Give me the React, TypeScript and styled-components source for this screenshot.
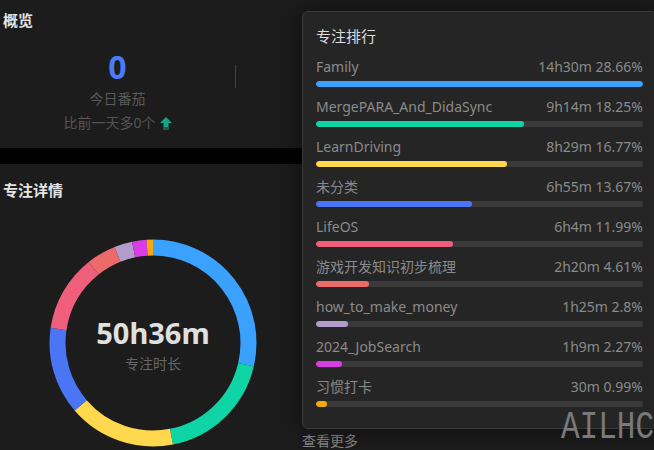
import React from "react";
import styled, { createGlobalStyle } from "styled-components";

const Global = createGlobalStyle`
  html, body { margin: 0; padding: 0; background: #1c1c1c; }
  body { width: 654px; height: 450px; overflow: hidden; font-family: "Noto Sans", "Noto Sans CJK SC", sans-serif; }
`;

const Page = styled.div`
  position: relative;
  width: 654px;
  height: 450px;
  overflow: hidden;
  background: #1c1c1c;
  display: flex;
  flex-direction: column;
`;

const Card = styled.section<{ $h: number }>`
  height: ${(p) => p.$h}px;
  background: #1c1c1c;
  display: flex;
  flex-direction: column;
  flex-shrink: 0;
`;

const Gap = styled.div`
  height: 16px;
  background: #000;
  flex-shrink: 0;
`;

const CardTitle = styled.h2<{ $top: number }>`
  margin: ${(p) => p.$top}px 0 0 3px;
  font-size: 15px;
  line-height: 20px;
  font-weight: 700;
  color: #e4e4e4;
`;

const StatRow = styled.div`
  display: flex;
  align-items: flex-start;
  margin-top: 19px;
`;

const Stat = styled.div`
  width: 235px;
  display: flex;
  flex-direction: column;
  align-items: center;
`;

const StatValue = styled.div`
  font-size: 32px;
  line-height: 36px;
  font-weight: 700;
  color: #4a7bf7;
`;

const StatLabel = styled.div`
  margin-top: 4px;
  font-size: 14px;
  line-height: 20px;
  color: #5a5a5a;
`;

const StatDiff = styled.div`
  margin-top: 4px;
  font-size: 14px;
  line-height: 20px;
  color: #555;
  display: flex;
  align-items: center;
  gap: 4px;
`;

const Divider = styled.div`
  width: 1px;
  height: 23px;
  margin-top: 16px;
  background: #444;
`;

const DetailBody = styled.div`
  display: flex;
  flex: 1;
`;

const ChartCol = styled.div`
  width: 302px;
  padding: 38px 0 0 48px;
  box-sizing: border-box;
`;

const ChartWrap = styled.div`
  position: relative;
  width: 210px;
  height: 210px;
`;

const ChartCenter = styled.div`
  position: absolute;
  inset: 0;
  display: flex;
  flex-direction: column;
  align-items: center;
  justify-content: center;
  padding-top: 2px;
  box-sizing: border-box;
`;

const Total = styled.div`
  font-size: 29px;
  line-height: 38px;
  font-weight: 700;
  color: #e0e0e0;
`;

const TotalLabel = styled.div`
  font-size: 14px;
  line-height: 20px;
  color: #666;
  margin-top: 2px;
`;

const MoreCol = styled.div`
  flex: 1;
  display: flex;
  align-items: flex-end;
`;

const More = styled.span`
  font-size: 14px;
  line-height: 19px;
  color: #8a8a8a;
`;

const Popover = styled.div`
  position: absolute;
  left: 302px;
  top: 11px;
  width: 355px;
  box-sizing: border-box;
  padding: 14px 13px 21px 13px;
  background: #252525;
  border: 1px solid #3a3a3a;
  border-radius: 6px;
  box-shadow: 0 0 28px rgba(0, 0, 0, 0.55);
  display: flex;
  flex-direction: column;
  gap: 10px;
`;

const PopTitle = styled.div`
  font-size: 15px;
  line-height: 20px;
  color: #dcdcdc;
  margin-bottom: 1px;
`;

const Row = styled.div`
  display: flex;
  flex-direction: column;
  gap: 4px;
`;

const RowHead = styled.div`
  display: flex;
  justify-content: space-between;
  font-size: 14px;
  line-height: 19px;
  color: #8a8a8a;
`;

const Track = styled.div`
  height: 6px;
  margin-top: 1px;
  border-radius: 3px;
  background: #3a3a3a;
  overflow: hidden;
`;

const Fill = styled.div<{ $color: string }>`
  height: 100%;
  border-radius: 3px;
  background: ${(p) => p.$color};
`;

const Watermark = styled.div`
  position: absolute;
  right: 0;
  bottom: 5px;
  font-family: "Liberation Mono", monospace;
  font-size: 31px;
  line-height: 28px;
  color: #7a7a7a;
  letter-spacing: 0px;
  transform: scaleY(1.25);
  transform-origin: bottom;
`;

const items = [
  { name: "Family", time: "14h30m", pct: 28.66, color: "#3ba1ff" },
  { name: "MergePARA_And_DidaSync", time: "9h14m", pct: 18.25, color: "#0fd5a6" },
  { name: "LearnDriving", time: "8h29m", pct: 16.77, color: "#ffd84d" },
  { name: "未分类", time: "6h55m", pct: 13.67, color: "#4a75f5" },
  { name: "LifeOS", time: "6h4m", pct: 11.99, color: "#ef5f7c" },
  { name: "游戏开发知识初步梳理", time: "2h20m", pct: 4.61, color: "#ec6a6a" },
  { name: "how_to_make_money", time: "1h25m", pct: 2.8, color: "#b29ccb" },
  { name: "2024_JobSearch", time: "1h9m", pct: 2.27, color: "#da3ce6" },
  { name: "习惯打卡", time: "30m", pct: 0.99, color: "#f7a90c" },
];

function Donut() {
  const cx = 105;
  const cy = 105;
  const r = 95.5;
  const w = 16;
  const total = items.reduce((s, i) => s + i.pct, 0);
  let acc = 0;
  const segs = items.map((it) => {
    const a0 = (acc / total) * Math.PI * 2;
    acc += it.pct;
    const a1 = (acc / total) * Math.PI * 2;
    const x0 = cx + r * Math.sin(a0);
    const y0 = cy - r * Math.cos(a0);
    const x1 = cx + r * Math.sin(a1);
    const y1 = cy - r * Math.cos(a1);
    const large = a1 - a0 > Math.PI ? 1 : 0;
    return (
      <path
        key={it.name}
        d={`M ${x0} ${y0} A ${r} ${r} 0 ${large} 1 ${x1} ${y1}`}
        stroke={it.color}
        strokeWidth={w}
        fill="none"
      />
    );
  });
  return (
    <svg width="210" height="210" viewBox="0 0 210 210">
      {segs}
    </svg>
  );
}

function UpArrow() {
  return (
    <svg width="12" height="13" viewBox="0 0 12 13">
      <path d="M6 0 L12 6 L8.5 6 L8.5 13 L3.5 13 L3.5 6 L0 6 Z" fill="#17a388" />
      <rect x="3.5" y="10" width="5" height="3" fill="#1f5a4c" />
    </svg>
  );
}

export default function App() {
  const max = Math.max(...items.map((i) => i.pct));
  return (
    <Page>
      <Global />
      <Card $h={148}>
        <CardTitle $top={10}>概览</CardTitle>
        <StatRow>
          <Stat>
            <StatValue>0</StatValue>
            <StatLabel>今日番茄</StatLabel>
            <StatDiff>
              比前一天多0个 <UpArrow />
            </StatDiff>
          </Stat>
          <Divider />
        </StatRow>
      </Card>
      <Gap />
      <Card $h={286}>
        <CardTitle $top={16}>专注详情</CardTitle>
        <DetailBody>
          <ChartCol>
            <ChartWrap>
              <Donut />
              <ChartCenter>
                <Total>50h36m</Total>
                <TotalLabel>专注时长</TotalLabel>
              </ChartCenter>
            </ChartWrap>
          </ChartCol>
          <MoreCol>
            <More>查看更多</More>
          </MoreCol>
        </DetailBody>
      </Card>
      <Popover>
        <PopTitle>专注排行</PopTitle>
        {items.map((it) => (
          <Row key={it.name}>
            <RowHead>
              <span>{it.name}</span>
              <span>
                {it.time} {it.pct}%
              </span>
            </RowHead>
            <Track>
              <Fill $color={it.color} style={{ width: `${(it.pct / max) * 100}%` }} />
            </Track>
          </Row>
        ))}
      </Popover>
      <Watermark>AILHC</Watermark>
    </Page>
  );
}
